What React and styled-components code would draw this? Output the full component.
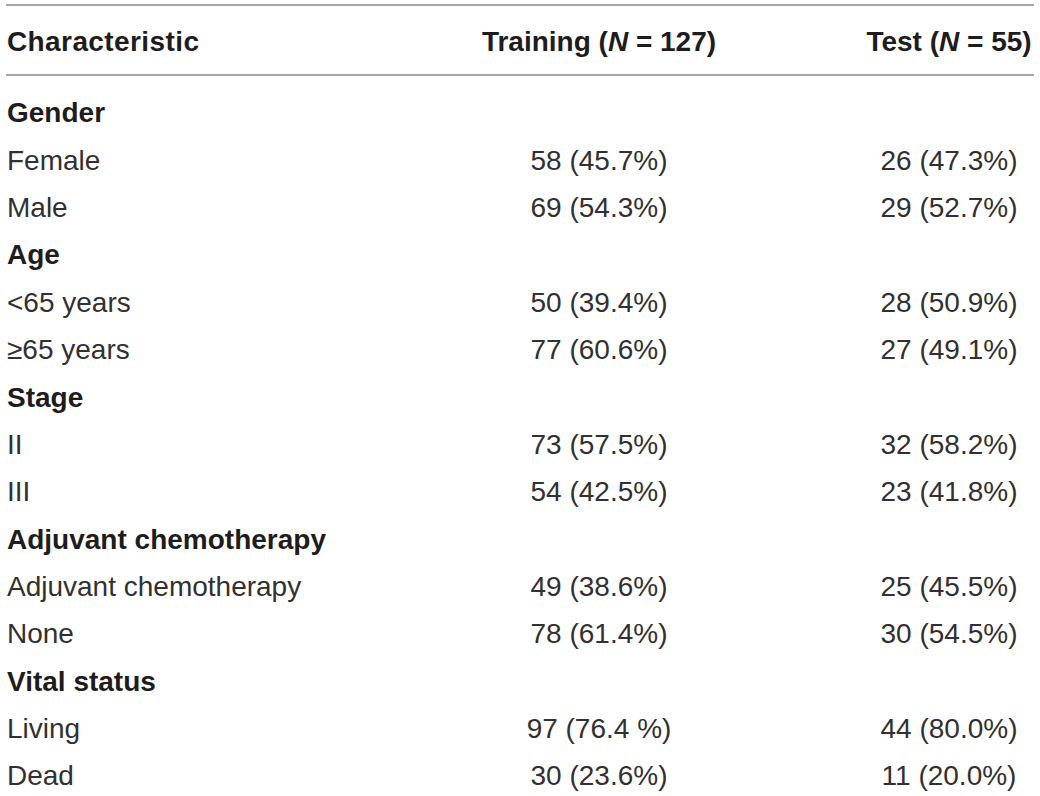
import React from "react"
import styled, { createGlobalStyle } from "styled-components"

const GlobalStyle = createGlobalStyle`
  html, body {
    margin: 0;
    padding: 0;
    background: #ffffff;
  }
  body {
    font-family: "Liberation Sans", Arial, sans-serif;
    color: #231f20;
  }
`

const TableWrap = styled.div`
  width: 1028px;
  margin: 4px 0 0 6px;
  border-top: 2px solid #a7a7a7;
`

const Grid = styled.div`
  display: grid;
  grid-template-columns: 328px 530px 170px;
`

const HeaderRow = styled(Grid)`
  padding: 12px 0 9px 0;
  border-bottom: 2px solid #a7a7a7;
`

const BodyRows = styled.div`
  padding-top: 13px;
`

const HeadCell = styled.div`
  font-size: 28px;
  font-weight: 700;
  line-height: 47.36px;
  white-space: nowrap;
  text-align: ${props => (props.$left ? "left" : "center")};
  padding-left: ${props => (props.$left ? "1px" : "0")};
  letter-spacing: ${props => (props.$left ? "0.4px" : "0")};
  color: #1f1c1d;

  em {
    font-style: italic;
  }
`

const Row = styled(Grid)`
  height: 47.36px;
  align-items: center;
`

const Cell = styled.div`
  font-size: 28px;
  line-height: 47.36px;
  white-space: nowrap;
  font-weight: ${props => (props.$bold ? 700 : 400)};
  text-align: ${props => (props.$left ? "left" : "center")};
  padding-left: ${props => (props.$left ? "1px" : "0")};
  color: ${props => (props.$bold ? "#1f1c1d" : "#333031")};
`

const rows = [
  { section: "Gender" },
  { label: "Female", train: "58 (45.7%)", test: "26 (47.3%)" },
  { label: "Male", train: "69 (54.3%)", test: "29 (52.7%)" },
  { section: "Age" },
  { label: "<65 years", train: "50 (39.4%)", test: "28 (50.9%)" },
  { label: "≥65 years", train: "77 (60.6%)", test: "27 (49.1%)" },
  { section: "Stage" },
  { label: "II", train: "73 (57.5%)", test: "32 (58.2%)" },
  { label: "III", train: "54 (42.5%)", test: "23 (41.8%)" },
  { section: "Adjuvant chemotherapy" },
  { label: "Adjuvant chemotherapy", train: "49 (38.6%)", test: "25 (45.5%)" },
  { label: "None", train: "78 (61.4%)", test: "30 (54.5%)" },
  { section: "Vital status" },
  { label: "Living", train: "97 (76.4 %)", test: "44 (80.0%)" },
  { label: "Dead", train: "30 (23.6%)", test: "11 (20.0%)" },
]

const App = () => {
  return (
    <>
      <GlobalStyle />
      <TableWrap>
        <HeaderRow>
          <HeadCell $left>Characteristic</HeadCell>
          <HeadCell>
            Training (<em>N</em> = 127)
          </HeadCell>
          <HeadCell>
            Test (<em>N</em> = 55)
          </HeadCell>
        </HeaderRow>
        <BodyRows>
          {rows.map((r, i) =>
            r.section ? (
              <Row key={i}>
                <Cell $left $bold>
                  {r.section}
                </Cell>
                <Cell />
                <Cell />
              </Row>
            ) : (
              <Row key={i}>
                <Cell $left>{r.label}</Cell>
                <Cell>{r.train}</Cell>
                <Cell>{r.test}</Cell>
              </Row>
            )
          )}
        </BodyRows>
      </TableWrap>
    </>
  )
}

export default App
